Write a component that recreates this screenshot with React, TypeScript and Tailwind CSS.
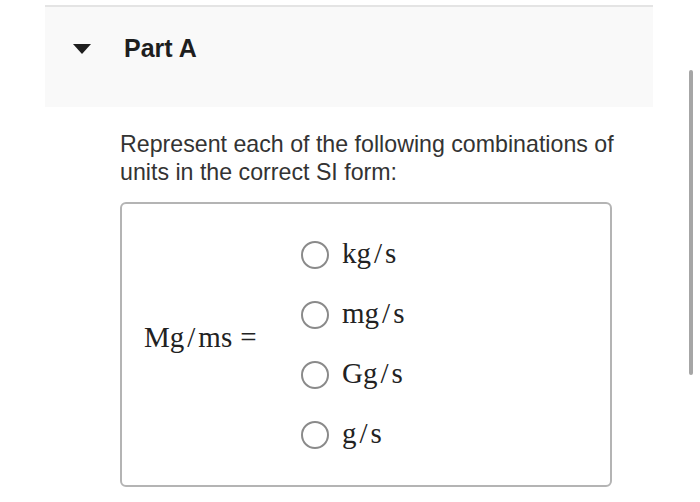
import React from "react";

const Slash = () => <span className="mx-[3px]">/</span>;

const options: { a: string; b: string }[] = [
  { a: "kg", b: "s" },
  { a: "mg", b: "s" },
  { a: "Gg", b: "s" },
  { a: "g", b: "s" },
];

export default function App() {
  return (
    <div className="relative w-[700px] h-[502px] bg-white overflow-hidden">
      <div className="pt-[5px]">
        <div className="ml-[45px] w-[608px] h-[102px] border-t-2 border-[#e4e4e4] bg-[#f9f9f9]">
          <div className="flex items-center h-[30px] mt-[26px] pl-[28px]">
            <svg width="18" height="10" viewBox="0 0 18 10" className="mt-[1px]">
              <polygon points="0,0 18,0 9,10" fill="#1e1e1e" />
            </svg>
            <span
              className="ml-[33px] mt-[1px] text-[25px] font-bold text-[#1e1e1e] leading-none"
              style={{ fontFamily: '"Liberation Sans", Arial, sans-serif' }}
            >
              Part A
            </span>
          </div>
        </div>
      </div>

      <p
        className="ml-[120px] mt-[23px] w-[530px] text-[23.2px] leading-[28px] text-[#333333]"
        style={{ fontFamily: '"Liberation Sans", Arial, sans-serif' }}
      >
        Represent each of the following combinations of units in the correct SI form:
      </p>

      <div
        className="ml-[120px] mt-[16px] w-[492px] h-[285px] border-2 border-[#b4b4b4] rounded-[6px] flex items-center text-[#222222]"
        style={{ fontFamily: '"Liberation Serif", "Times New Roman", serif' }}
      >
        <div className="w-[179px] pl-[22px] mb-[14px] text-[29px] leading-[29px] whitespace-nowrap">
          Mg<Slash />ms<span className="ml-[8px]">=</span>
        </div>
        <div className="flex flex-col">
          {options.map((o) => (
            <div key={o.a} className="flex items-center h-[60px]">
              <div className="w-[28px] h-[28px] rounded-full border-2 border-[#8a8a8a] bg-white" />
              <span className="ml-[13px] mb-[2px] text-[29px] leading-[29px] whitespace-nowrap">
                {o.a}
                <Slash />
                {o.b}
              </span>
            </div>
          ))}
        </div>
      </div>

      <div className="absolute left-[689px] top-[70px] w-[4px] h-[305px] rounded-full bg-[#a6a6a6]" />
    </div>
  );
}
